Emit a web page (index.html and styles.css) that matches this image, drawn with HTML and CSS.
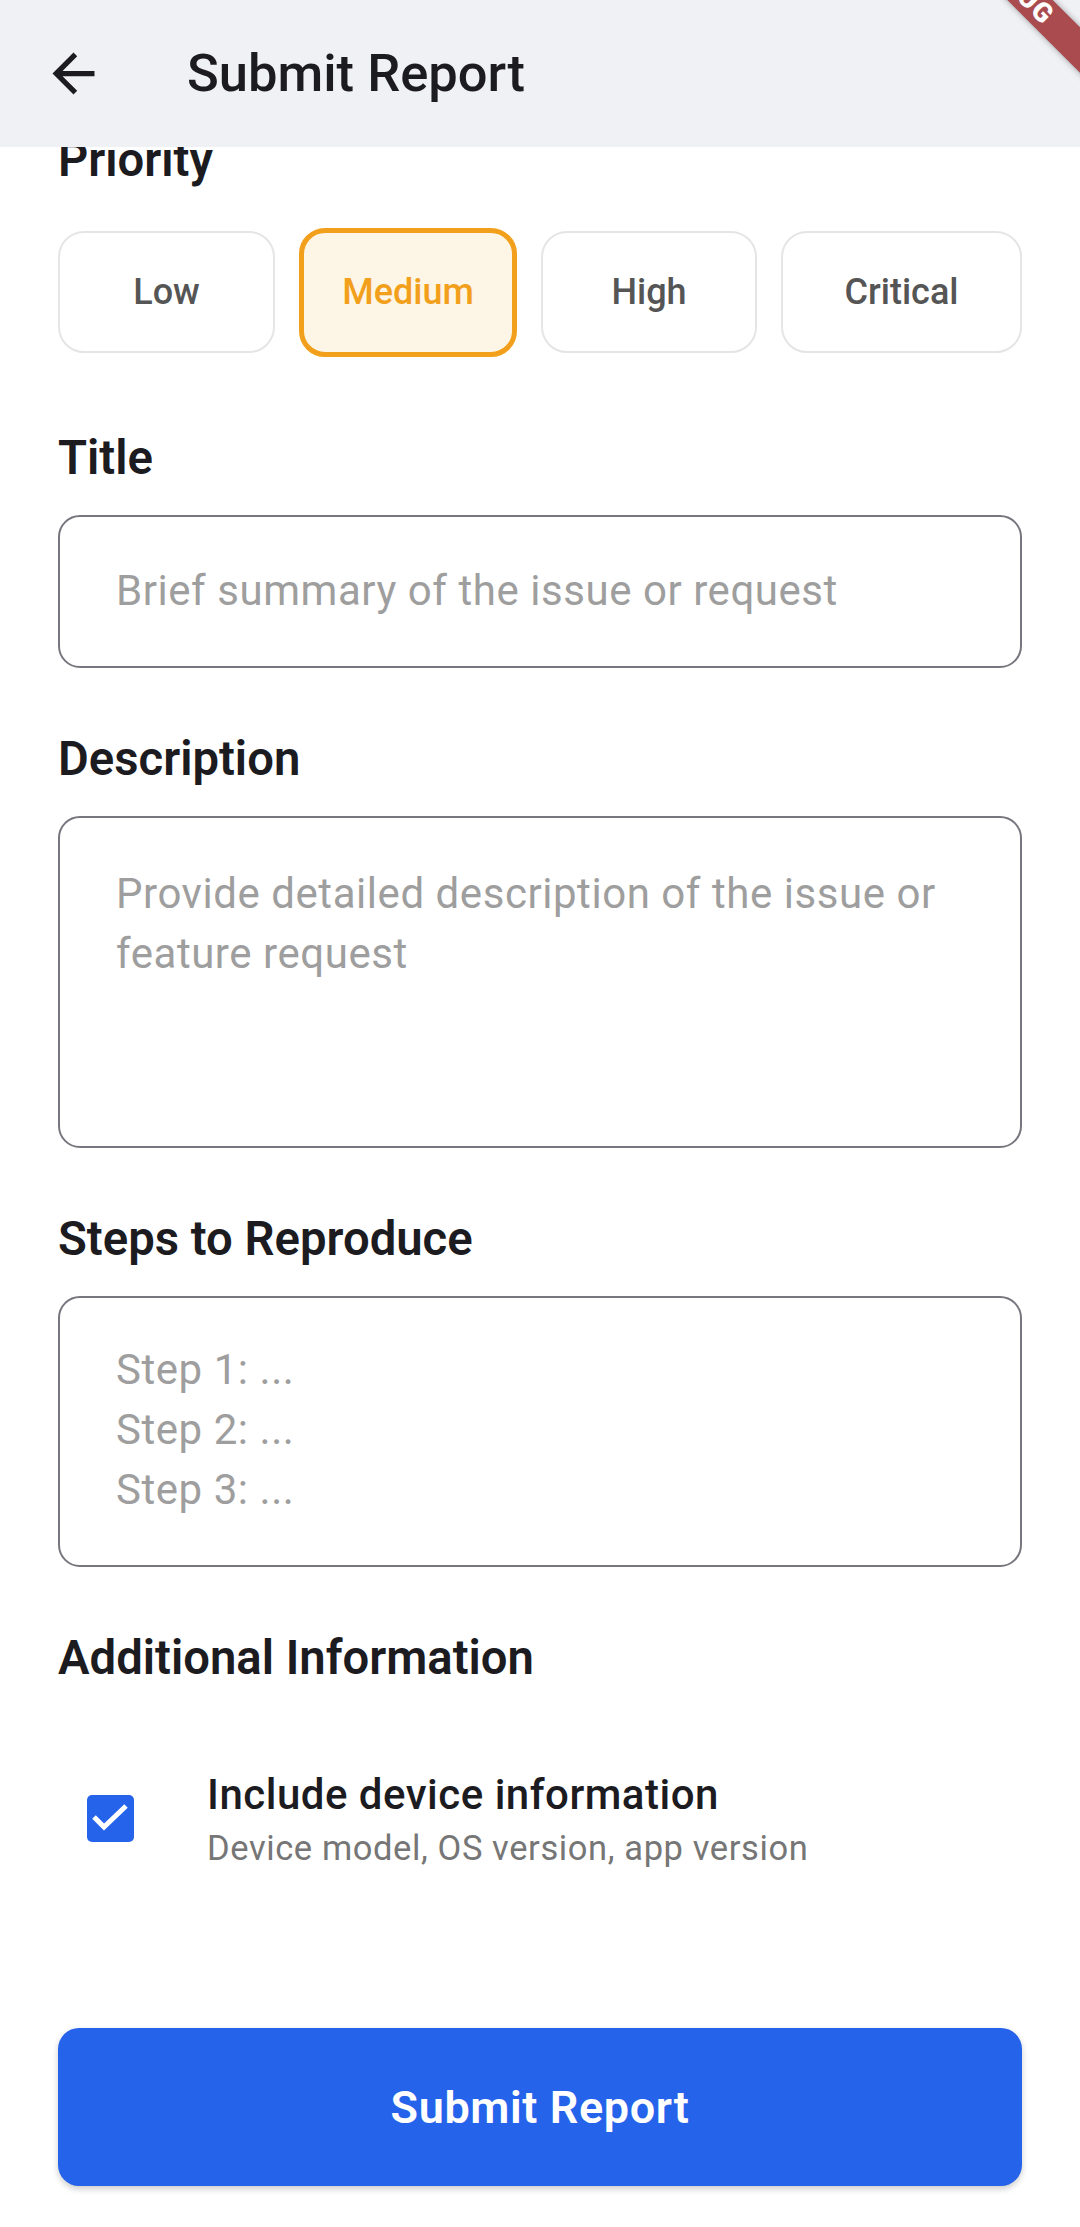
FILE: index.html
```html
<!DOCTYPE html>
<html lang="en">
<head>
<meta charset="utf-8">
<title>Submit Report</title>
<link rel="stylesheet" href="styles.css">
</head>
<body>
<div class="screen">
  <header class="appbar">
    <button class="back" aria-label="Back">
      <svg viewBox="0 0 24 24" width="63" height="63"><path d="M20 11H7.83l5.59-5.59L12 4l-8 8 8 8 1.41-1.41L7.83 13H20v-2z" fill="#1c1b1f"/></svg>
    </button>
    <h1 class="appbar-title">Submit Report</h1>
    <div class="debug-banner"><span>DEBUG</span></div>
  </header>

  <main class="content">
    <div class="label label-first">Priority</div>
    <div class="priority-row">
      <div class="prio prio-low">Low</div>
      <div class="prio prio-medium selected">Medium</div>
      <div class="prio prio-high">High</div>
      <div class="prio prio-critical">Critical</div>
    </div>

    <section class="field field-first">
      <div class="label">Title</div>
      <div class="input"><span class="placeholder">Brief summary of the issue or request</span></div>
    </section>

    <section class="field">
      <div class="label">Description</div>
      <div class="input input-desc"><span class="placeholder">Provide detailed description of the issue or feature request</span></div>
    </section>

    <section class="field">
      <div class="label">Steps to Reproduce</div>
      <div class="input input-steps"><span class="placeholder">Step 1: ...<br>Step 2: ...<br>Step 3: ...</span></div>
    </section>

    <section class="field">
      <div class="label">Additional Information</div>
      <div class="check-row">
        <div class="checkbox">
          <svg viewBox="0 0 47 47" width="47" height="47"><polyline points="7,22 17,32 39,11" fill="none" stroke="#ffffff" stroke-width="5"/></svg>
        </div>
        <div class="check-text">
          <div class="check-title">Include device information</div>
          <div class="check-sub">Device model, OS version, app version</div>
        </div>
      </div>
    </section>

    <button class="submit">Submit Report</button>
  </main>
</div>
</body>
</html>
```

FILE: styles.css
```css
* { box-sizing: border-box; }
html, body { margin: 0; padding: 0; }
body {
  background: #ffffff;
  font-family: Roboto, "Noto Sans", "Liberation Sans", sans-serif;
  color: #1c1b1f;
  width: 1080px;
  height: 2227px;
  overflow: hidden;
}
.screen { width: 1080px; height: 2227px; position: relative; }

.appbar {
  position: relative;
  z-index: 2;
  height: 147px;
  background: #f0f1f5;
  display: flex;
  align-items: center;
  padding-left: 42px;
  overflow: hidden;
}
.back {
  width: 63px; height: 63px;
  padding: 0; border: 0; background: none;
  display: flex;
}
.appbar-title {
  margin: 0 0 0 82px;
  font-size: 52.5px;
  font-weight: 500;
  line-height: 147px;
  color: #1c1b1f;
}
.debug-banner {
  position: absolute;
  left: 817px;
  top: -29px;
  width: 400px;
  height: 32px;
  background: #a94b4f;
  transform: rotate(45deg);
  display: flex;
  align-items: center;
  justify-content: center;
  box-shadow: 0 0 6px rgba(0,0,0,0.35);
}
.debug-banner span {
  color: #ffffff;
  font-family: Roboto, sans-serif;
  font-weight: 900;
  font-size: 27px;
  letter-spacing: 1px;
  line-height: 32px;
}

.content { padding: 0 58px; }

.label {
  font-size: 47.25px;
  font-weight: 600;
  line-height: 47px;
  color: #1c1b1f;
}
.label-first { margin-top: -10px; }

.priority-row {
  margin-top: 47px;
  height: 122px;
  display: flex;
  align-items: center;
  gap: 24px;
}
.prio {
  height: 122px;
  border: 2.5px solid #e5e5e7;
  border-radius: 26px;
  background: #ffffff;
  display: flex;
  align-items: center;
  justify-content: center;
  font-size: 36px;
  font-weight: 500;
  color: #555555;
}
.prio-low { width: 217px; }
.prio-medium { width: 218px; }
.prio-high { width: 216px; }
.prio-critical { width: 241px; }
.prio.selected {
  height: 129px;
  border: 5px solid #f2a01b;
  background: #fdf5e5;
  color: #f2a01b;
}

.field { margin-top: 68px; }
.field-first { margin-top: 82px; }
.field .label + * { margin-top: 33px; }

.input {
  border: 2.5px solid #77767e;
  border-radius: 22px;
  padding: 44px 56px;
  font-size: 42px;
  line-height: 60px;
  letter-spacing: 0.55px;
  min-height: 153px;
}
.input-desc { min-height: 332px; padding-top: 46px; }
.input-steps { min-height: 271px; padding-top: 42px; }
.placeholder { color: #9e9e9e; }

.check-row {
  display: flex;
  align-items: flex-start;
}
.field .label + .check-row { margin-top: 88px; }
.checkbox {
  width: 47px; height: 47px;
  margin-left: 29px;
  margin-top: 25px;
  border-radius: 5px;
  background: #2563eb;
  display: flex;
}
.check-text { margin-left: 73px; }
.check-title {
  font-size: 42px;
  font-weight: 500;
  line-height: 50px;
  letter-spacing: 0.5px;
  color: #1c1b1f;
}
.check-sub {
  font-size: 34.5px;
  line-height: 56px;
  letter-spacing: 0.6px;
  color: #767676;
}

.submit {
  display: block;
  width: 100%;
  margin-top: 152px;
  height: 158px;
  border: 0;
  border-radius: 21px;
  background: #2563eb;
  color: #ffffff;
  font-family: Roboto, "Noto Sans", sans-serif;
  font-size: 45px;
  font-weight: 600;
  letter-spacing: 0.6px;
  box-shadow: 0 3px 6px rgba(0,0,0,0.2);
}
```
